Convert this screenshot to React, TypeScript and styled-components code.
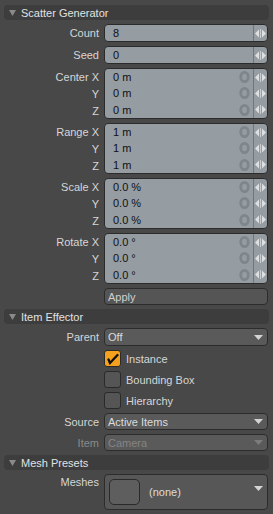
import { ReactElement } from "react";
import styled, { createGlobalStyle } from "styled-components";

const GlobalStyle = createGlobalStyle`
    html, body {
        margin: 0;
        padding: 0;
        background-color: #484848;
    }
    body {
        font-family: "Liberation Sans", Arial, sans-serif;
        font-size: 11px;
    }
`;

const Panel = styled.div`
    width: 273px;
    height: 514px;
    box-sizing: border-box;
    padding: 5px 5px 0 4px;
    background-color: #484848;
    display: flex;
    flex-direction: column;
    gap: 4px;
    overflow: hidden;
`;

const Header = styled.div`
    height: 15px;
    flex-shrink: 0;
    margin-right: -1px;
    border-radius: 4px;
    background-color: #3d3d3d;
    display: flex;
    align-items: center;
    gap: 5px;
    padding-left: 5px;
    color: #e2e2e2;
    font-size: 11px;
`;

const Row = styled.div<{ $top?: boolean }>`
    display: grid;
    grid-template-columns: 96px 1fr;
    column-gap: 4px;
    align-items: ${(p) => (p.$top ? "start" : "center")};
    flex-shrink: 0;
`;

const Label = styled.div<{ $disabled?: boolean; $top?: boolean }>`
    text-align: right;
    padding-right: 1px;
    padding-top: ${(p) => (p.$top ? "2px" : "0")};
    color: ${(p) => (p.$disabled ? "#8a8a8a" : "#d6d6d6")};
    white-space: nowrap;
`;

const LabelStack = styled.div`
    display: flex;
    flex-direction: column;
    height: 51px;
    & > div {
        flex: 1;
        display: flex;
        align-items: center;
        justify-content: flex-end;
    }
`;

const FieldBox = styled.div<{ $h: number }>`
    height: ${(p) => p.$h}px;
    box-sizing: border-box;
    border: 1px solid #2b2b2b;
    border-radius: 4px;
    background-color: #959ca2;
    display: flex;
    flex-direction: column;
    overflow: hidden;
`;

const FieldRow = styled.div`
    flex: 1;
    display: flex;
    align-items: center;
    color: #111;
`;

const FieldValue = styled.div`
    flex: 1;
    padding-left: 8px;
`;

const KeyMark = styled.div`
    width: 12px;
    margin-right: 3px;
    display: flex;
    align-items: center;
    justify-content: center;
`;

const Spinner = styled.div`
    width: 13px;
    align-self: stretch;
    border-left: 1px solid #70777c;
    display: flex;
    align-items: center;
    justify-content: center;
`;

const Select = styled.div<{ $disabled?: boolean; $h?: number }>`
    height: ${(p) => p.$h ?? 17}px;
    box-sizing: border-box;
    border: 1px solid #2c2c2c;
    border-radius: 4px;
    background-color: #5a5a5a;
    color: ${(p) => (p.$disabled ? "#858585" : "#dcdcdc")};
    display: flex;
    align-items: center;
    justify-content: space-between;
    padding: 0 4px 0 3px;
`;

const Button = styled.div`
    height: 17px;
    box-sizing: border-box;
    border: 1px solid #2c2c2c;
    border-radius: 4px;
    background-color: #555555;
    color: #d0d0d0;
    display: flex;
    align-items: center;
    padding-left: 3px;
`;

const CheckLine = styled.div`
    display: flex;
    align-items: center;
    gap: 5px;
    height: 17px;
    color: #d6d6d6;
`;

const CheckBox = styled.div<{ $checked?: boolean }>`
    width: 17px;
    height: 17px;
    box-sizing: border-box;
    border: 1px solid #2a2a2a;
    border-radius: 3px;
    background-color: ${(p) => (p.$checked ? "#f4a11d" : "#555555")};
    display: flex;
    align-items: center;
    justify-content: center;
`;

const MeshBox = styled.div`
    height: 36px;
    box-sizing: border-box;
    border: 1px solid #2c2c2c;
    border-radius: 4px;
    background-color: #575757;
    display: flex;
    align-items: flex-start;
    padding: 4px 4px 0 4px;
    gap: 9px;
    color: #dcdcdc;
`;

const Thumb = styled.div`
    width: 31px;
    height: 26px;
    box-sizing: border-box;
    border: 1px solid #2a2a2a;
    border-radius: 5px;
    background-color: #5e5e5e;
`;

const MeshName = styled.div`
    flex: 1;
    align-self: center;
    margin-top: -4px;
`;

const MeshArrow = styled.div`
    padding-top: 2px;
`;

const Fold = () => (
  <svg width="7" height="6" viewBox="0 0 7 6">
    <polygon points="0,0 7,0 3.5,6" fill="#8a8a8a" />
  </svg>
);

const Arrows = () => (
  <svg width="11" height="9" viewBox="0 0 11 9">
    <polygon points="0,4.5 4,0.5 4,8.5" fill="#dde0e2" />
    <rect x="5" y="0" width="1" height="9" fill="#c9cdd0" />
    <polygon points="7,0.5 11,4.5 7,8.5" fill="#dde0e2" />
  </svg>
);

const Key = () => (
  <svg width="11" height="12" viewBox="0 0 11 12">
    <ellipse cx="5.5" cy="6" rx="3.8" ry="4.6" fill="none" stroke="#7f868b" strokeWidth="2.8" />
  </svg>
);

const DropArrow = ({ color = "#d4d4d4" }: { color?: string }) => (
  <svg width="9" height="5" viewBox="0 0 9 5">
    <polygon points="0,0 9,0 4.5,5" fill={color} />
  </svg>
);

const Tick = () => (
  <svg width="13" height="13" viewBox="0 0 13 13">
    <path d="M2.5 7.5 L4 11 L11.5 3" fill="none" stroke="#111" strokeWidth="2.3" strokeLinecap="round" />
  </svg>
);

type Group = { labels: string[]; values: string[] };

const groups: Group[] = [
  { labels: ["Center X", "Y", "Z"], values: ["0 m", "0 m", "0 m"] },
  { labels: ["Range X", "Y", "Z"], values: ["1 m", "1 m", "1 m"] },
  { labels: ["Scale X", "Y", "Z"], values: ["0.0 %", "0.0 %", "0.0 %"] },
  { labels: ["Rotate X", "Y", "Z"], values: ["0.0 °", "0.0 °", "0.0 °"] },
];

const SingleField = ({ label, value }: { label: string; value: string }) => (
  <Row>
    <Label>{label}</Label>
    <FieldBox $h={18}>
      <FieldRow>
        <FieldValue>{value}</FieldValue>
        <Spinner>
          <Arrows />
        </Spinner>
      </FieldRow>
    </FieldBox>
  </Row>
);

const VectorField = ({ labels, values }: Group) => (
  <Row>
    <LabelStack>
      {labels.map((l) => (
        <Label key={l}>{l}</Label>
      ))}
    </LabelStack>
    <FieldBox $h={51}>
      {values.map((v, i) => (
        <FieldRow key={i}>
          <FieldValue>{v}</FieldValue>
          <KeyMark>
            <Key />
          </KeyMark>
          <Spinner>
            <Arrows />
          </Spinner>
        </FieldRow>
      ))}
    </FieldBox>
  </Row>
);

export const App = (): ReactElement => {
  return (
    <>
      <GlobalStyle />
      <Panel>
        <Header>
          <Fold />
          Scatter Generator
        </Header>
        <SingleField label="Count" value="8" />
        <SingleField label="Seed" value="0" />
        {groups.map((g) => (
          <VectorField key={g.labels[0]} {...g} />
        ))}
        <Row>
          <span />
          <Button>Apply</Button>
        </Row>

        <Header>
          <Fold />
          Item Effector
        </Header>
        <Row>
          <Label>Parent</Label>
          <Select $h={18}>
            Off
            <DropArrow />
          </Select>
        </Row>
        <Row>
          <span />
          <CheckLine>
            <CheckBox $checked>
              <Tick />
            </CheckBox>
            Instance
          </CheckLine>
        </Row>
        <Row>
          <span />
          <CheckLine>
            <CheckBox />
            Bounding Box
          </CheckLine>
        </Row>
        <Row>
          <span />
          <CheckLine>
            <CheckBox />
            Hierarchy
          </CheckLine>
        </Row>
        <Row>
          <Label>Source</Label>
          <Select>
            Active Items
            <DropArrow />
          </Select>
        </Row>
        <Row>
          <Label $disabled>Item</Label>
          <Select $disabled>
            Camera
            <DropArrow color="#7c7c7c" />
          </Select>
        </Row>

        <Header>
          <Fold />
          Mesh Presets
        </Header>
        <Row $top>
          <Label $top>Meshes</Label>
          <MeshBox>
            <Thumb />
            <MeshName>(none)</MeshName>
            <MeshArrow>
              <DropArrow />
            </MeshArrow>
          </MeshBox>
        </Row>
      </Panel>
    </>
  );
};

export default App;
